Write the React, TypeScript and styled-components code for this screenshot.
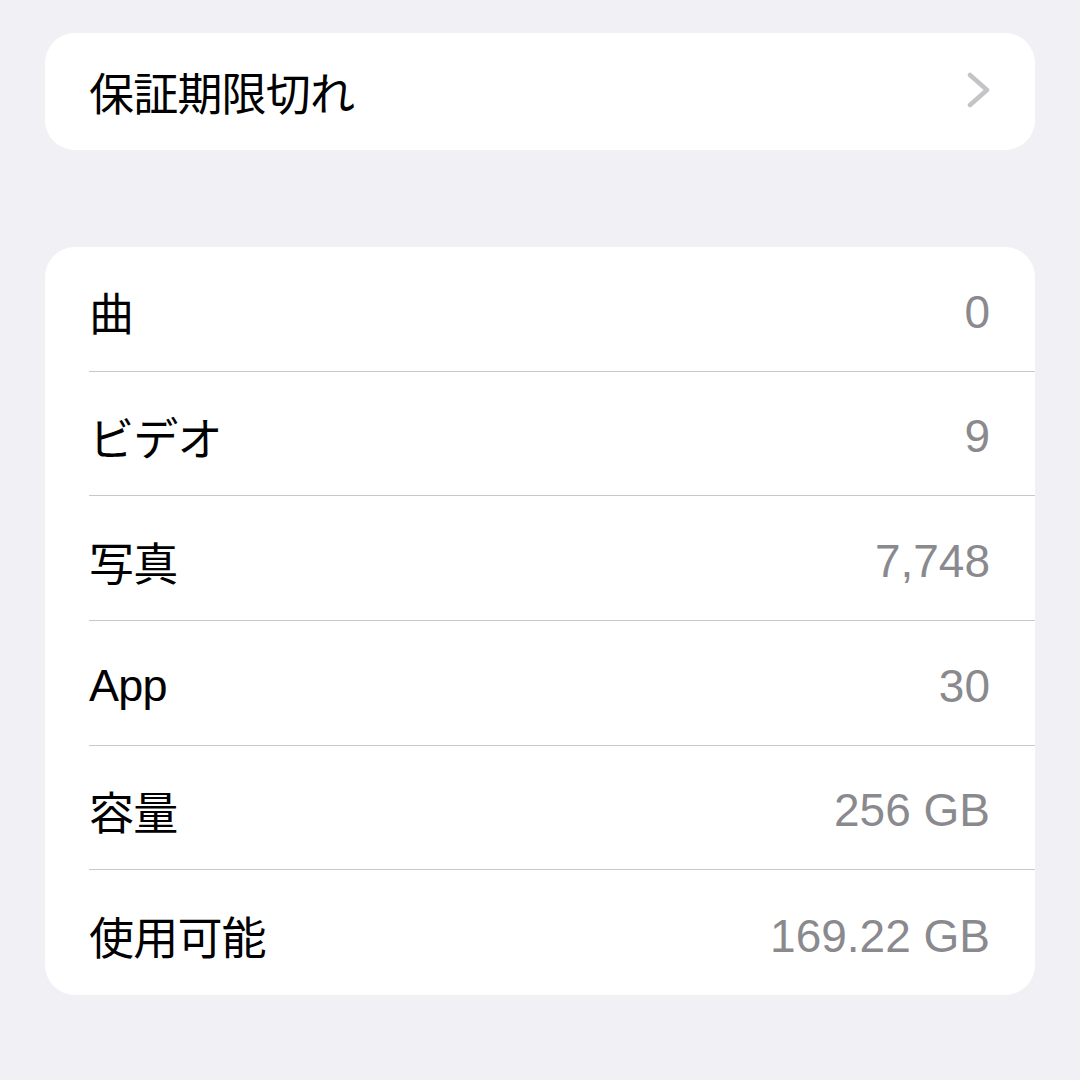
import styled, { createGlobalStyle } from "styled-components";

interface InfoRow {
  label: string;
  value: string;
}

const rows: InfoRow[] = [
  { label: "曲", value: "0" },
  { label: "ビデオ", value: "9" },
  { label: "写真", value: "7,748" },
  { label: "App", value: "30" },
  { label: "容量", value: "256 GB" },
  { label: "使用可能", value: "169.22 GB" },
];

const GlobalStyle = createGlobalStyle`
  html, body {
    margin: 0;
    padding: 0;
    background: #f0f0f5;
  }
  body {
    font-family: "Liberation Sans", "Noto Sans CJK JP", sans-serif;
    -webkit-font-smoothing: antialiased;
  }
`;

export default function App() {
  return (
    <>
      <GlobalStyle />
      <Page>
        <Card>
          <LinkRow>
            <Label>保証期限切れ</Label>
            <Chevron width="24" height="36" viewBox="0 0 24 36">
              <path
                d="M3 3 L20 18 L3 33"
                fill="none"
                stroke="#c4c4c7"
                strokeWidth="4.5"
                strokeLinecap="round"
                strokeLinejoin="round"
              />
            </Chevron>
          </LinkRow>
        </Card>

        <Card>
          {rows.map((row, i) => (
            <Row key={row.label} $last={i === rows.length - 1}>
              <Label>{row.label}</Label>
              <Value>{row.value}</Value>
            </Row>
          ))}
        </Card>
      </Page>
    </>
  );
}

const Page = styled.div`
  width: 1080px;
  height: 1080px;
  box-sizing: border-box;
  padding: 33px 45px 0;
  display: flex;
  flex-direction: column;
  gap: 97px;
  background: #f0f0f5;
`;

const Card = styled.div`
  background: #ffffff;
  border-radius: 30px;
  padding-left: 44px;
  display: flex;
  flex-direction: column;
`;

const LinkRow = styled.div`
  height: 117px;
  box-sizing: border-box;
  display: flex;
  align-items: center;
  justify-content: space-between;
  padding: 0 44px 0 0;
`;

const Row = styled.div<{ $last: boolean }>`
  height: 124.67px;
  box-sizing: border-box;
  display: flex;
  align-items: center;
  justify-content: space-between;
  padding: 6px 45px 0 0;
  border-bottom: ${(p) => (p.$last ? "none" : "1px solid #c8c8cc")};
`;

const Label = styled.span`
  font-size: 45px;
  color: #000000;
  letter-spacing: -0.8px;
`;

const Value = styled.span`
  font-size: 46px;
  color: #8a8a8e;
`;

const Chevron = styled.svg`
  display: block;
  margin-bottom: 4px;
`;
